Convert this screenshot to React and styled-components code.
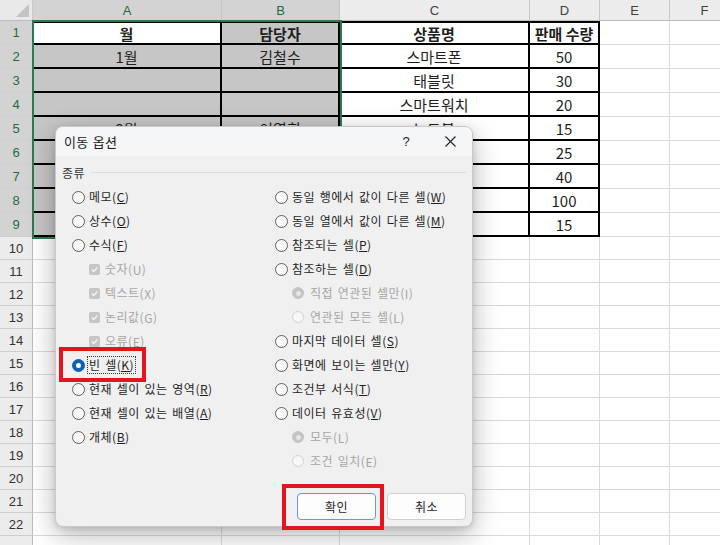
import React from 'react'
import styled, { createGlobalStyle } from 'styled-components'

const GlobalStyle = createGlobalStyle`
    html, body {
        margin: 0;
        padding: 0;
        background: #ffffff;
        overflow: hidden;
    }
    body {
        font-family: "Noto Sans CJK KR", "Noto Sans", sans-serif;
    }
`

const columns = ['A', 'B', 'C', 'D', 'E', 'F']

// cells hidden under the dialog are left empty
const rows = [
    ['월', '담당자', '상품명', '판매 수량'],
    ['1월', '김철수', '스마트폰', '50'],
    ['', '', '태블릿', '30'],
    ['', '', '스마트워치', '20'],
    ['2월', '이영희', '노트북', '15'],
    ['', '', '', '25'],
    ['', '', '', '40'],
    ['', '', '', '100'],
    ['', '', '', '15'],
]

const leftOptions = [
    { label: '메모', key: 'C' },
    { label: '상수', key: 'O' },
    { label: '수식', key: 'F' },
    { label: '숫자', key: 'U', sub: true, check: true },
    { label: '텍스트', key: 'X', sub: true, check: true },
    { label: '논리값', key: 'G', sub: true, check: true },
    { label: '오류', key: 'E', sub: true, check: true },
    { label: '빈 셀', key: 'K', checked: true, focus: true },
    { label: '현재 셀이 있는 영역', key: 'R' },
    { label: '현재 셀이 있는 배열', key: 'A' },
    { label: '개체', key: 'B' },
]

const rightOptions = [
    { label: '동일 행에서 값이 다른 셀', key: 'W' },
    { label: '동일 열에서 값이 다른 셀', key: 'M' },
    { label: '참조되는 셀', key: 'P' },
    { label: '참조하는 셀', key: 'D' },
    { label: '직접 연관된 셀만', key: 'I', sub: true, checked: true },
    { label: '연관된 모든 셀', key: 'L', sub: true },
    { label: '마지막 데이터 셀', key: 'S' },
    { label: '화면에 보이는 셀만', key: 'Y' },
    { label: '조건부 서식', key: 'T' },
    { label: '데이터 유효성', key: 'V' },
    { label: '모두', key: 'L', sub: true, checked: true },
    { label: '조건 일치', key: 'E', sub: true },
]

const CloseIcon = () => (
    <svg width="11" height="11" viewBox="0 0 11 11">
        <path d="M0.5 0.5 L10.5 10.5 M10.5 0.5 L0.5 10.5" stroke="#222" strokeWidth="1.1" fill="none" />
    </svg>
)

const CheckIcon = () => (
    <svg width="9" height="9" viewBox="0 0 9 9">
        <path d="M1.8 4.6 L3.7 6.4 L7.3 2.6" stroke="#ffffff" strokeWidth="1.2" fill="none" />
    </svg>
)

const Option = ({ item }) => {
    const disabled = !!item.sub
    return (
        <StyledOption $sub={item.sub}>
            {item.check ? (
                <StyledCheckbox>
                    <CheckIcon />
                </StyledCheckbox>
            ) : (
                <StyledRadio $checked={item.checked} $disabled={disabled} $small={item.sub} />
            )}
            <StyledOptionLabel $disabled={disabled} $focus={item.focus}>
                {`${item.label}(`}
                <StyledKey $plain={disabled}>{item.key}</StyledKey>
                {')'}
            </StyledOptionLabel>
        </StyledOption>
    )
}

const App = () => {
    return (
        <>
            <GlobalStyle />
            <StyledPage>
                <StyledSheet>
                    <StyledCorner />
                    {columns.map((col, ci) => (
                        <StyledColHeader key={col} $sel={ci < 2}>
                            {col}
                        </StyledColHeader>
                    ))}
                    {Array.from({ length: 23 }).map((_, ri) => {
                        const data = rows[ri]
                        const inTable = ri < 9
                        return (
                            <React.Fragment key={ri}>
                                <StyledRowHeader $sel={inTable}>{ri < 22 ? ri + 1 : ''}</StyledRowHeader>
                                {columns.map((col, ci) => {
                                    const tableCell = inTable && ci < 4
                                    const sel = inTable && ci < 2 && !(ri === 0 && ci === 0)
                                    return (
                                        <StyledCell
                                            key={col}
                                            $table={tableCell}
                                            $top={tableCell && ri === 0}
                                            $bold={ri === 0}
                                            $sel={sel}
                                        >
                                            {tableCell ? data[ci] : ''}
                                        </StyledCell>
                                    )
                                })}
                            </React.Fragment>
                        )
                    })}
                </StyledSheet>
                <StyledSelection />

                <StyledDialog>
                    <StyledTitleBar>
                        <StyledTitle>이동 옵션</StyledTitle>
                        <StyledTitleButton>?</StyledTitleButton>
                        <StyledTitleButton>
                            <CloseIcon />
                        </StyledTitleButton>
                    </StyledTitleBar>
                    <StyledBody>
                        <StyledGroupLabel>종류</StyledGroupLabel>
                        <StyledOptions>
                            <StyledColumn>
                                {leftOptions.map((item) => (
                                    <Option key={item.label} item={item} />
                                ))}
                            </StyledColumn>
                            <StyledColumn>
                                {rightOptions.map((item) => (
                                    <Option key={item.label} item={item} />
                                ))}
                            </StyledColumn>
                        </StyledOptions>
                        <StyledButtons>
                            <StyledButton $primary>확인</StyledButton>
                            <StyledButton>취소</StyledButton>
                        </StyledButtons>
                    </StyledBody>
                </StyledDialog>

                <StyledMark style={{ left: 59, top: 347, width: 87, height: 35 }} />
                <StyledMark style={{ left: 282, top: 484, width: 102, height: 46 }} />
            </StyledPage>
        </>
    )
}

export default App

const StyledPage = styled.div`
    position: relative;
    width: 720px;
    height: 545px;
    overflow: hidden;
    background: #ffffff;
`

const StyledSheet = styled.div`
    display: grid;
    grid-template-columns: 33px 189px 118px 190px 70px 70px 70px;
    grid-template-rows: 21px repeat(9, 24px) repeat(14, 23px);
    width: 740px;
    font-family: "Noto Sans CJK KR", sans-serif;
`

const StyledCorner = styled.div`
    position: relative;
    background: #e9e9e9;
    border-right: 1px solid #c8c8c8;
    border-bottom: 1px solid #bdbdbd;
    box-sizing: border-box;
    &::after {
        content: '';
        position: absolute;
        right: 3px;
        bottom: 3px;
        width: 0;
        height: 0;
        border-left: 13px solid transparent;
        border-bottom: 13px solid #c4c4c4;
    }
`

const StyledColHeader = styled.div`
    display: flex;
    align-items: center;
    justify-content: center;
    box-sizing: border-box;
    background: ${(p) => (p.$sel ? '#d3d3d3' : '#ececec')};
    color: ${(p) => (p.$sel ? '#256a43' : '#404040')};
    border-right: 1px solid #c6c6c6;
    border-bottom: 1px solid #bdbdbd;
    font-family: "Liberation Sans", "Noto Sans", sans-serif;
    font-size: 13px;
`

const StyledRowHeader = styled.div`
    display: flex;
    align-items: center;
    justify-content: center;
    box-sizing: border-box;
    background: ${(p) => (p.$sel ? '#d3d3d3' : '#ececec')};
    color: ${(p) => (p.$sel ? '#256a43' : '#333333')};
    border-right: 1px solid #bdbdbd;
    border-bottom: 1px solid #cfcfcf;
    font-family: "Liberation Sans", "Noto Sans", sans-serif;
    font-size: 13px;
`

const StyledCell = styled.div`
    display: flex;
    align-items: center;
    justify-content: center;
    box-sizing: border-box;
    overflow: hidden;
    white-space: nowrap;
    background: ${(p) => (p.$sel ? '#c6c6c6' : '#ffffff')};
    color: #1f1f1f;
    font-size: 15px;
    font-weight: ${(p) => (p.$bold ? 700 : 400)};
    border-right: ${(p) => (p.$table ? '2px solid #000' : '1px solid #dadada')};
    border-bottom: ${(p) => (p.$table ? '2px solid #000' : '1px solid #dadada')};
    border-top: ${(p) => (p.$top ? '2px solid #000' : 'none')};
`

const StyledSelection = styled.div`
    position: absolute;
    left: 32px;
    top: 20px;
    width: 310px;
    height: 219px;
    box-sizing: border-box;
    border: 2px solid #2e7a50;
    pointer-events: none;
`

const StyledDialog = styled.div`
    position: absolute;
    left: 55px;
    top: 126px;
    width: 418px;
    box-sizing: border-box;
    background: #f0f0f0;
    border: 1px solid #c9c9c9;
    border-radius: 8px;
    box-shadow: 0 8px 28px rgba(0, 0, 0, 0.28), 0 2px 6px rgba(0, 0, 0, 0.12);
    overflow: hidden;
    font-family: "Noto Sans CJK KR", sans-serif;
`

const StyledTitleBar = styled.div`
    display: flex;
    align-items: center;
    height: 29px;
    padding-left: 8px;
    background: #f4f6f8;
    color: #1a1a1a;
`

const StyledTitle = styled.div`
    flex: 1;
    font-size: 13px;
    letter-spacing: 0.3px;
    word-spacing: 1px;
`

const StyledTitleButton = styled.div`
    display: flex;
    align-items: center;
    justify-content: center;
    width: 44px;
    height: 29px;
    font-size: 13px;
    color: #222;
    font-family: "Liberation Sans", sans-serif;
`

const StyledBody = styled.div`
    display: flex;
    flex-direction: column;
    padding: 8px 6px 6px 6px;
`

const StyledGroupLabel = styled.div`
    display: flex;
    align-items: center;
    gap: 6px;
    height: 16px;
    font-size: 12px;
    letter-spacing: 0.4px;
    color: #333;
    &::after {
        content: '';
        flex: 1;
        height: 1px;
        background: #dcdcdc;
    }
`

const StyledOptions = styled.div`
    display: grid;
    grid-template-columns: 203px 1fr;
    padding-left: 10px;
    margin-top: 5px;
`

const StyledColumn = styled.div`
    display: flex;
    flex-direction: column;
`

const StyledOption = styled.div`
    display: flex;
    align-items: center;
    height: 24px;
    padding-left: ${(p) => (p.$sub ? '17px' : '0')};
`

const StyledRadio = styled.div`
    position: relative;
    width: ${(p) => (p.$small ? '12px' : '13px')};
    height: ${(p) => (p.$small ? '12px' : '13px')};
    box-sizing: border-box;
    border-radius: 50%;
    flex-shrink: 0;
    margin-right: ${(p) => (p.$small ? '5px' : '3px')};
    background: ${(p) =>
        p.$checked ? (p.$disabled ? '#c4c4c4' : '#0a62b8') : p.$disabled ? '#f7f7f7' : '#fafafa'};
    border: 1px solid
        ${(p) => (p.$checked ? (p.$disabled ? '#c4c4c4' : '#0a62b8') : p.$disabled ? '#d2d2d2' : '#5e5e5e')};
    &::after {
        content: '';
        display: ${(p) => (p.$checked ? 'block' : 'none')};
        position: absolute;
        left: 50%;
        top: 50%;
        width: 5px;
        height: 5px;
        margin: -2.5px 0 0 -2.5px;
        border-radius: 50%;
        background: ${(p) => (p.$disabled ? '#e6e6e6' : '#ffffff')};
    }
`

const StyledCheckbox = styled.div`
    display: flex;
    align-items: center;
    justify-content: center;
    width: 11px;
    height: 11px;
    flex-shrink: 0;
    margin-right: 4px;
    border-radius: 2px;
    background: #c6c6c6;
`

const StyledOptionLabel = styled.span`
    display: flex;
    align-items: center;
    font-size: 12px;
    line-height: 16px;
    letter-spacing: 0.5px;
    word-spacing: 1.5px;
    white-space: pre;
    color: ${(p) => (p.$disabled ? '#a6a6a6' : '#1f1f1f')};
    outline: ${(p) => (p.$focus ? '1px dotted #333' : 'none')};
    outline-offset: 0;
    padding: 0 1px;
`

const StyledKey = styled.span`
    display: inline-block;
    line-height: 13px;
    border-bottom: ${(p) => (p.$plain ? 'none' : '1px solid currentColor')};
`

const StyledButtons = styled.div`
    display: flex;
    justify-content: flex-end;
    gap: 11px;
    margin-top: 20px;
`

const StyledButton = styled.div`
    display: flex;
    align-items: center;
    justify-content: center;
    width: 79px;
    height: 27px;
    box-sizing: border-box;
    background: #fdfdfd;
    border: 1px solid ${(p) => (p.$primary ? '#6a9ad0' : '#d0d0d0')};
    border-radius: 4px;
    font-size: 12px;
    letter-spacing: 0.5px;
    color: #1f1f1f;
`

const StyledMark = styled.div`
    position: absolute;
    box-sizing: border-box;
    border: 4px solid #e3141e;
    pointer-events: none;
`
